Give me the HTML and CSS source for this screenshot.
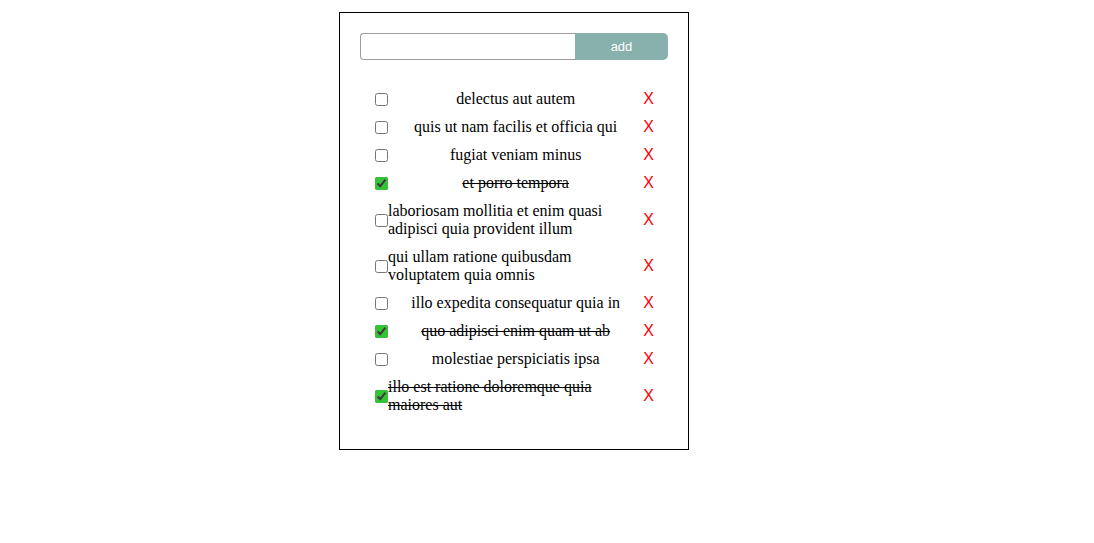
FILE: index.html
```html
<!DOCTYPE html>
<html>
<head>
<meta charset="utf-8">
<link rel="stylesheet" href="styles.css">
</head>
<body>
<div class="app">
  <form class="add-form">
    <input class="add-input" type="text">
    <button class="add-btn" type="button">add</button>
  </form>
  <ul class="todos">
    <li class="todo"><input type="checkbox" class="check"><span class="title">delectus aut autem</span><span class="del">X</span></li>
    <li class="todo"><input type="checkbox" class="check"><span class="title">quis ut nam facilis et officia qui</span><span class="del">X</span></li>
    <li class="todo"><input type="checkbox" class="check"><span class="title">fugiat veniam minus</span><span class="del">X</span></li>
    <li class="todo"><input type="checkbox" class="check" checked><span class="title done">et porro tempora</span><span class="del">X</span></li>
    <li class="todo"><input type="checkbox" class="check"><span class="title">laboriosam mollitia et enim quasi adipisci quia provident illum</span><span class="del">X</span></li>
    <li class="todo"><input type="checkbox" class="check"><span class="title">qui ullam ratione quibusdam voluptatem quia omnis</span><span class="del">X</span></li>
    <li class="todo"><input type="checkbox" class="check"><span class="title">illo expedita consequatur quia in</span><span class="del">X</span></li>
    <li class="todo"><input type="checkbox" class="check" checked><span class="title done">quo adipisci enim quam ut ab</span><span class="del">X</span></li>
    <li class="todo"><input type="checkbox" class="check"><span class="title">molestiae perspiciatis ipsa</span><span class="del">X</span></li>
    <li class="todo"><input type="checkbox" class="check" checked><span class="title done">illo est ratione doloremque quia maiores aut</span><span class="del">X</span></li>
  </ul>
</div>
</body>
</html>
```
FILE: styles.css
```css
html, body {
  margin: 0;
  padding: 0;
  background: #fff;
}
body {
  font-family: "Liberation Serif", "Times New Roman", serif;
  font-size: 16px;
  color: #000;
}
.app {
  box-sizing: border-box;
  width: 350px;
  margin: 12px 0 0 339px;
  border: 1px solid #000;
  padding: 20px;
}
.add-form {
  display: flex;
  margin: 0;
  height: 27px;
}
.add-input {
  box-sizing: border-box;
  flex: 0 0 215px;
  height: 27px;
  margin: 0;
  border: 1px solid #a09a9a;
  border-right: none;
  border-radius: 4px 0 0 4px;
  padding: 0 6px;
  outline: none;
  font-family: "Liberation Sans", Arial, sans-serif;
}
.add-btn {
  flex: 1;
  height: 27px;
  margin: 0;
  border: none;
  border-radius: 0 5px 5px 0;
  background: #88b0ac;
  color: #fff;
  font-family: "Liberation Sans", Arial, sans-serif;
  font-size: 13px;
  padding: 0;
}
.todos {
  list-style: none;
  margin: 25px 0 10px;
  padding: 0 14px 0 15px;
}
.todo {
  display: flex;
  justify-content: space-between;
  align-items: center;
  padding: 5px 0;
  line-height: 18px;
}
.check {
  margin: 0;
  width: 13px;
  height: 13px;
  flex: 0 0 13px;
  accent-color: #36c236;
}
.title.done {
  text-decoration: line-through;
}
.del {
  color: #ff0000;
  font-family: "Liberation Sans", Arial, sans-serif;
  font-size: 16px;
  flex: 0 0 auto;
}
```
